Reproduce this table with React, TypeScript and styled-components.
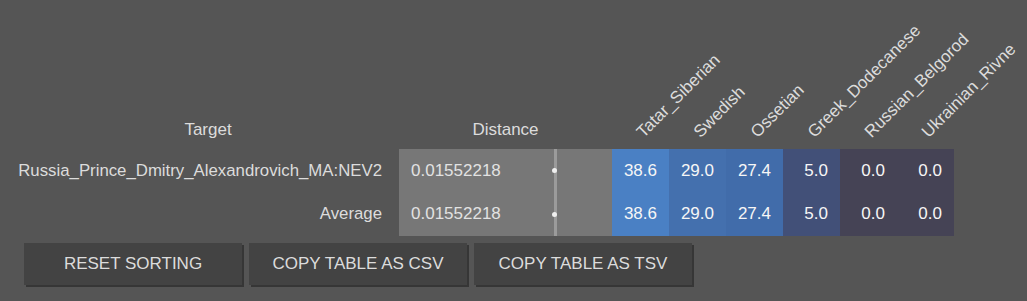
import React from 'react';
import styled, { createGlobalStyle } from 'styled-components';

const GlobalStyle = createGlobalStyle`
    html, body {
        margin: 0;
        padding: 0;
        background: #555555;
    }
    body {
        font-family: 'Liberation Sans', Arial, sans-serif;
        font-size: 17px;
        color: #dcdcdc;
    }
`;

const Page = styled.div`
    width: 1027px;
    height: 301px;
    padding-left: 17px;
    box-sizing: border-box;
    overflow: hidden;
`;

const Table = styled.div`
    display: grid;
    grid-template-columns: 382px 213px repeat(6, 57px);
    grid-template-rows: 149px 43.5px 43.5px;
`;

const HeaderCell = styled.div`
    display: flex;
    align-items: flex-end;
    justify-content: center;
    padding-bottom: 9px;
    box-sizing: border-box;
    line-height: 20px;
    color: #dcdcdc;
`;

const SlantedHeader = styled.div`
    display: flex;
    align-items: flex-end;
    padding-bottom: 7px;
    box-sizing: border-box;
    min-width: 0;
`;

const SlantedLabel = styled.span`
    display: block;
    white-space: nowrap;
    line-height: 20px;
    color: #dcdcdc;
    transform-origin: 0 100%;
    transform: translateX(35px) rotate(-45deg);
`;

const NameCell = styled.div`
    display: flex;
    align-items: center;
    justify-content: flex-end;
    padding-right: 17px;
    white-space: nowrap;
    font-size: 16.8px;
    color: #dcdcdc;
`;

const DistanceCell = styled.div`
    display: grid;
    grid-template-columns: 155px 3px 1fr;
    background: #777777;
`;

const DistanceValue = styled.div`
    display: flex;
    align-items: center;
    padding-left: 12px;
    color: #e2e2e2;
`;

const DistanceLine = styled.div`
    display: flex;
    align-items: center;
    justify-content: center;
    background: #9b9b9b;
`;

const Dot = styled.span`
    flex-shrink: 0;
    width: 5px;
    height: 5px;
    margin-left: -2px;
    border-radius: 50%;
    background: #f0f0f0;
`;

const ValueCell = styled.div<{ $bg: string }>`
    display: flex;
    align-items: center;
    justify-content: flex-end;
    padding-right: 12px;
    background: ${(p) => p.$bg};
    color: #f6f6f6;
`;

const Toolbar = styled.div`
    display: flex;
    gap: 7px;
    margin: 7px 0 0 7px;
`;

const Button = styled.button`
    width: 218px;
    height: 42px;
    border: none;
    background: #434343;
    box-shadow: 2px 2px 0 #363636;
    color: #dcdcdc;
    font-family: 'Liberation Sans', Arial, sans-serif;
    font-size: 17px;
    padding: 0;
    cursor: pointer;
`;

const populations = [
    { name: 'Tatar_Siberian', value: '38.6', bg: '#4a80c4' },
    { name: 'Swedish', value: '29.0', bg: '#4470ae' },
    { name: 'Ossetian', value: '27.4', bg: '#416caa' },
    { name: 'Greek_Dodecanese', value: '5.0', bg: '#425078' },
    { name: 'Russian_Belgorod', value: '0.0', bg: '#454355' },
    { name: 'Ukrainian_Rivne', value: '0.0', bg: '#454355' },
];

const rows = [
    { name: 'Russia_Prince_Dmitry_Alexandrovich_MA:NEV2', distance: '0.01552218' },
    { name: 'Average', distance: '0.01552218' },
];

const App: React.FC = () => {
    return (
        <Page>
            <GlobalStyle />
            <Table>
                <HeaderCell>Target</HeaderCell>
                <HeaderCell>Distance</HeaderCell>
                {populations.map((p) => (
                    <SlantedHeader key={p.name}>
                        <SlantedLabel>{p.name}</SlantedLabel>
                    </SlantedHeader>
                ))}
                {rows.map((r) => (
                    <React.Fragment key={r.name}>
                        <NameCell>{r.name}</NameCell>
                        <DistanceCell>
                            <DistanceValue>{r.distance}</DistanceValue>
                            <DistanceLine>
                                <Dot />
                            </DistanceLine>
                            <div />
                        </DistanceCell>
                        {populations.map((p) => (
                            <ValueCell key={p.name} $bg={p.bg}>
                                {p.value}
                            </ValueCell>
                        ))}
                    </React.Fragment>
                ))}
            </Table>
            <Toolbar>
                <Button>RESET SORTING</Button>
                <Button>COPY TABLE AS CSV</Button>
                <Button>COPY TABLE AS TSV</Button>
            </Toolbar>
        </Page>
    );
};

export default App;
